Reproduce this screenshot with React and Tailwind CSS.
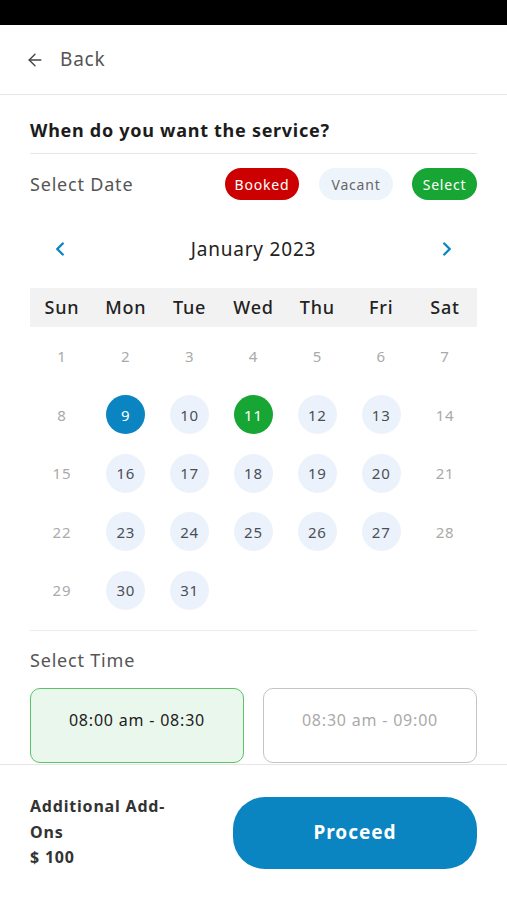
import { ArrowLeft, ChevronLeft, ChevronRight } from 'lucide-react'

const DAYS = ['Sun', 'Mon', 'Tue', 'Wed', 'Thu', 'Fri', 'Sat']

// Jan 2023 starts on a Sunday
const BOOKED = [9]
const SELECTED = [11]

function dayState(d) {
  if (d < 9) return 'off'
  const dow = (d - 1) % 7
  if (dow === 0 || dow === 6) return 'off'
  if (BOOKED.includes(d)) return 'booked'
  if (SELECTED.includes(d)) return 'selected'
  return 'vacant'
}

const CIRCLE = {
  off: 'text-[#aaaaaa]',
  vacant: 'bg-[#ecf2fc] text-[#4a4f57]',
  booked: 'bg-[#0a85c2] text-white',
  selected: 'bg-[#17a534] text-white',
}

export default function App() {
  const dates = Array.from({ length: 31 }, (_, i) => i + 1)

  return (
    <div className="w-full h-[900px] flex flex-col overflow-hidden bg-white font-['Noto_Sans',sans-serif] tracking-[0.05em]">
      <div className="h-[25px] bg-black shrink-0" />

      <div className="h-[70px] shrink-0 flex items-center gap-[15px] px-[25px] border-b border-[#e6e6e6]">
        <ArrowLeft size={20} strokeWidth={1.6} className="text-[#444]" />
        <span className="text-[19px] text-[#555]">Back</span>
      </div>

      <div className="flex-1 overflow-hidden px-[30px]">
        <h2 className="pt-[23px] text-[18px] leading-[24px] font-bold text-[#1c1c1c] tracking-[0.04em]">When do you want the service?</h2>
        <div className="mt-[11px] border-t border-[#e6e6e6]" />

        <div className="mt-[14px] h-[32px] flex items-center">
          <span className="flex-1 text-[18px] text-[#555]">Select Date</span>
          <span className="h-[32px] w-[74px] rounded-full bg-[#cc0000] text-white text-[14px] flex items-center justify-center">Booked</span>
          <span className="ml-[20px] h-[32px] w-[74px] rounded-full bg-[#eef4fc] text-[#666] text-[14px] flex items-center justify-center">Vacant</span>
          <span className="ml-[19px] h-[32px] w-[65px] rounded-full bg-[#17a534] text-white text-[14px] flex items-center justify-center">Select</span>
        </div>

        <div className="mt-[36px] h-[26px] flex items-center justify-between px-[19px]">
          <ChevronLeft size={22} strokeWidth={2.6} className="text-[#0a85c2]" />
          <span className="text-[19px] text-[#222]">January 2023</span>
          <ChevronRight size={22} strokeWidth={2.6} className="text-[#0a85c2]" />
        </div>

        <div className="mt-[26px] h-[39px] grid grid-cols-7 bg-[#f2f2f2]">
          {DAYS.map(d => (
            <div key={d} className="flex items-center justify-center text-[18px] font-medium text-[#222]">{d}</div>
          ))}
        </div>

        <div className="grid grid-cols-7">
          {dates.map(d => {
            const s = dayState(d)
            return (
              <div key={d} className="h-[58.5px] flex items-center justify-center">
                <span className={`w-[39px] h-[39px] rounded-full flex items-center justify-center text-[15px] ${CIRCLE[s]}`}>{d}</span>
              </div>
            )
          })}
        </div>

        <div className="mt-[10px] border-t border-[#ececec]" />

        <div className="mt-[17px] text-[18px] leading-[24px] text-[#555]">Select Time</div>

        <div className="mt-[16px] grid grid-cols-2 gap-[19px]">
          <div className="h-[75px] rounded-[10px] border-[1.5px] border-[#5cc26a] bg-[#eaf7ec] pt-[20px] text-center text-[16px] leading-[22px] text-[#1c1c1c]">
            08:00 am - 08:30
          </div>
          <div className="h-[75px] rounded-[10px] border-[1.5px] border-[#c4c4c4] bg-white pt-[20px] text-center text-[16px] leading-[22px] text-[#aaaaaa]">
            08:30 am - 09:00
          </div>
        </div>
      </div>

      <div className="h-[136px] shrink-0 border-t border-[#e6e6e6] flex items-center px-[30px] bg-white">
        <div className="w-[203px] text-[16px] leading-[25.5px] font-bold text-[#333]">
          Additional Add-<br />Ons
          <div>$ 100</div>
        </div>
        <button className="flex-1 h-[72px] rounded-[32px] bg-[#0a85c2] text-white text-[19px] font-bold tracking-[0.05em]">Proceed</button>
      </div>
    </div>
  )
}
